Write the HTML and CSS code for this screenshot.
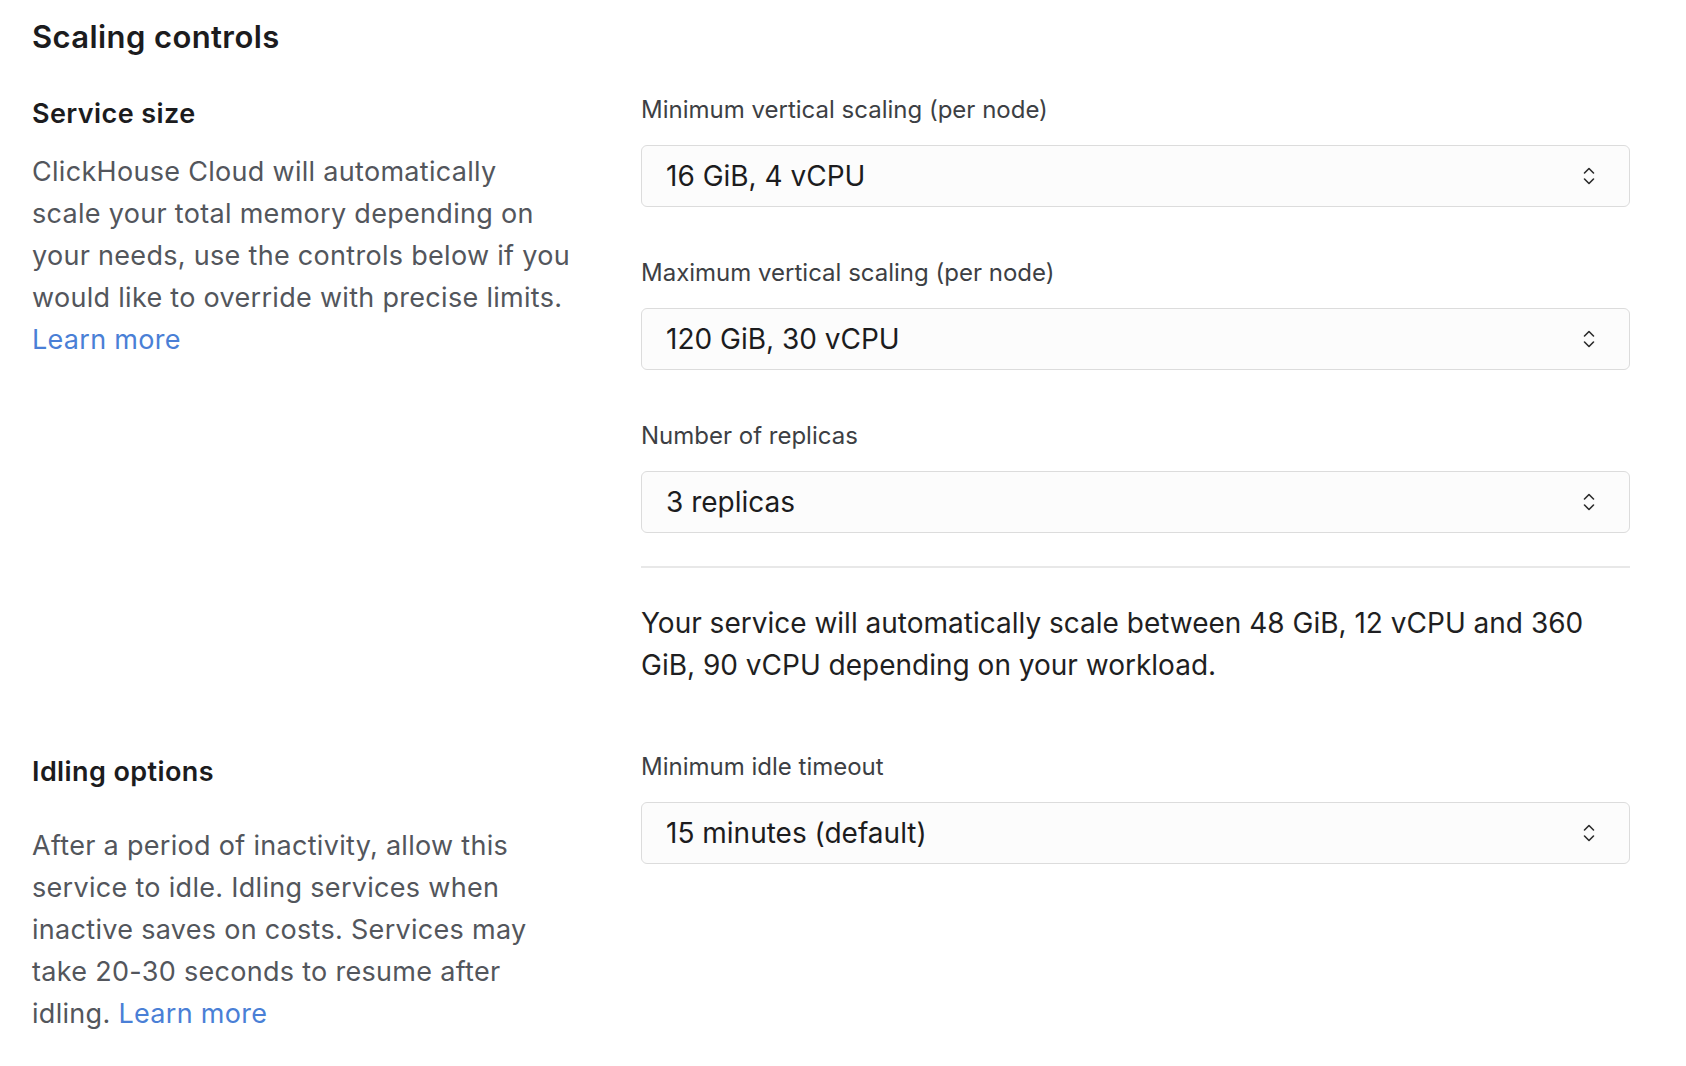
FILE: index.html
```html
<!DOCTYPE html>
<html lang="en">
<head>
<meta charset="utf-8">
<title>Scaling controls</title>
<link rel="stylesheet" href="styles.css">
</head>
<body>
<main class="page">
  <h1 class="title">Scaling controls</h1>

  <section class="row">
    <div class="side">
      <h2 class="side-title">Service size</h2>
      <p class="side-text side-text-size">ClickHouse Cloud will automatically scale&nbsp;your total memory depending on your needs, use the controls below if you would like to override with precise limits. <a class="link" href="#">Learn more</a></p>
    </div>
    <div class="main">
      <div class="fields">
        <div class="field">
          <label class="label">Minimum vertical scaling (per node)</label>
          <div class="select"><span>16 GiB, 4 vCPU</span>
            <svg class="chev" viewBox="0 0 12 20" width="12" height="20"><path d="M1.5 7 6 2.5 10.5 7M1.5 13 6 17.5 10.5 13" fill="none" stroke="#2b2b2b" stroke-width="1.6" stroke-linecap="round" stroke-linejoin="round"/></svg>
          </div>
        </div>
        <div class="field">
          <label class="label">Maximum vertical scaling (per node)</label>
          <div class="select"><span>120 GiB, 30 vCPU</span>
            <svg class="chev" viewBox="0 0 12 20" width="12" height="20"><path d="M1.5 7 6 2.5 10.5 7M1.5 13 6 17.5 10.5 13" fill="none" stroke="#2b2b2b" stroke-width="1.6" stroke-linecap="round" stroke-linejoin="round"/></svg>
          </div>
        </div>
        <div class="field">
          <label class="label">Number of replicas</label>
          <div class="select"><span>3 replicas</span>
            <svg class="chev" viewBox="0 0 12 20" width="12" height="20"><path d="M1.5 7 6 2.5 10.5 7M1.5 13 6 17.5 10.5 13" fill="none" stroke="#2b2b2b" stroke-width="1.6" stroke-linecap="round" stroke-linejoin="round"/></svg>
          </div>
        </div>
      </div>
      <hr class="divider">
      <p class="summary">Your service will automatically scale between 48 GiB, 12 vCPU and 360 GiB, 90 vCPU depending on your workload.</p>
    </div>
  </section>

  <section class="row row-idle">
    <div class="side">
      <h2 class="side-title">Idling options</h2>
      <p class="side-text side-text-idle">After a period of inactivity, allow this service to idle. Idling services when inactive saves on costs. Services may take 20-30 seconds to resume after idling. <a class="link" href="#">Learn more</a></p>
    </div>
    <div class="main main-idle">
      <div class="field">
        <label class="label">Minimum idle timeout</label>
        <div class="select"><span>15 minutes (default)</span>
          <svg class="chev" viewBox="0 0 12 20" width="12" height="20"><path d="M1.5 7 6 2.5 10.5 7M1.5 13 6 17.5 10.5 13" fill="none" stroke="#2b2b2b" stroke-width="1.6" stroke-linecap="round" stroke-linejoin="round"/></svg>
        </div>
      </div>
    </div>
  </section>
</main>
</body>
</html>
```

FILE: styles.css
```css
* { box-sizing: border-box; }

html, body {
  margin: 0;
  padding: 0;
  background: #ffffff;
}

body {
  font-family: Inter, "Noto Sans", "Liberation Sans", sans-serif;
  color: #1d1d1f;
}

.page {
  padding: 19px 56px 0 32px;
}

.title {
  margin: 0;
  font-size: 31px;
  line-height: 36px;
  font-weight: 600;
  letter-spacing: 0.4px;
  color: #1c1c1e;
}

.row {
  display: grid;
  grid-template-columns: 576px 1fr;
  column-gap: 33px;
  margin-top: 41px;
}

.row-idle {
  margin-top: 64px;
}

.side-title {
  margin: 3px 0 0;
  font-size: 27px;
  line-height: 30px;
  font-weight: 600;
  letter-spacing: 0.4px;
  color: #1c1c1e;
}

.row-idle .side-title {
  margin-top: 7px;
}

.side-text {
  margin: 22px 0 0;
  font-size: 27px;
  line-height: 42px;
  letter-spacing: 0.3px;
  color: #53565c;
  max-width: 550px;
}

.side-text-size {
  max-width: 560px;
}

.side-text-idle {
  margin-top: 38px;
}

.link {
  color: #4a7fd6;
  text-decoration: none;
}

.main-idle {
  padding-top: 3px;
}

.fields {
  display: flex;
  flex-direction: column;
  gap: 52px;
}

.field {
  display: flex;
  flex-direction: column;
  gap: 21px;
}

.label {
  font-size: 24px;
  line-height: 28px;
  color: #3d3f44;
}

.select {
  height: 62px;
  display: flex;
  align-items: center;
  justify-content: space-between;
  padding: 0 34px 0 24px;
  background: #fcfcfc;
  border: 1px solid #dcdcdc;
  border-radius: 6px;
  font-size: 28px;
  color: #1c1c1e;
}

.chev {
  display: block;
}

.divider {
  margin: 33px 0 0;
  border: 0;
  border-top: 2px solid #e8e8e8;
}

.summary {
  margin: 34px 0 0;
  font-size: 28px;
  line-height: 42px;
  color: #1f1f22;
}
```
